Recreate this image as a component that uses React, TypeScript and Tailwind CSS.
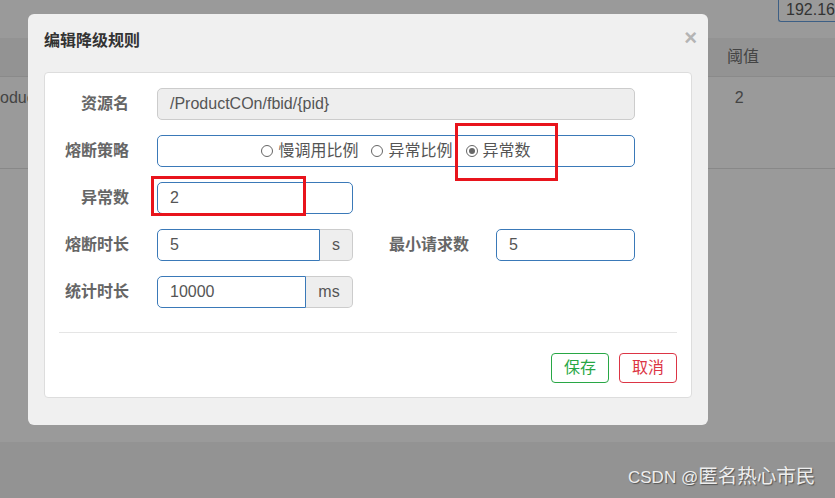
import React from "react";

const font = { fontFamily: '"Liberation Sans", "Noto Sans CJK SC", sans-serif' };

function Label({ children }: { children: React.ReactNode }) {
  return (
    <div className="w-[100px] shrink-0 pr-[28px] text-right text-[16px] font-bold text-[#666]">{children}</div>
  );
}

function Radio({ checked, label }: { checked?: boolean; label: string }) {
  return (
    <label className="flex items-center gap-[5px]">
      <span className="flex h-[12px] w-[12px] items-center justify-center rounded-full border border-[#666] bg-white">
        {checked && <span className="h-[6px] w-[6px] rounded-full bg-[#666]" />}
      </span>
      <span>{label}</span>
    </label>
  );
}

export default function App() {
  return (
    <div className="relative h-[498px] w-[835px] overflow-hidden bg-[#9a9a9a] text-[16px]" style={font}>
      {/* page behind the overlay */}
      <div className="flex h-[38px] justify-end">
        <div className="h-[22px] w-[57px] rounded-bl-[3px] border border-t-0 border-r-0 border-[#3d5f85] pl-[7px] text-[16px] leading-[20px] text-[#333]">
          192.16
        </div>
      </div>
      <div className="flex h-[39px] items-center border-b border-[#8a8a8a] bg-[#939393]">
        <span className="ml-[727px] text-[#444]">阈值</span>
      </div>
      <div className="flex h-[92px] items-start border-b border-[#888] pt-[9px] text-[#444]">
        <span className="ml-0">oduc</span>
        <span className="ml-[700px]">2</span>
      </div>
      <div className="mt-[273px] h-[56px] bg-[#939393]" />

      {/* modal */}
      <div className="absolute left-[28px] top-[14px] flex h-[411px] w-[680px] flex-col rounded-[6px] bg-[#f0f0f0] px-[16px]">
        <div className="flex h-[54px] items-center justify-between">
          <h3 className="text-[16px] font-bold text-[#333]">编辑降级规则</h3>
          <span className="mr-[-5px] mt-[-8px] text-[22px] font-bold text-[#b4b4b4]">×</span>
        </div>
        <div className="mt-[4px] flex h-[326px] flex-col rounded-[4px] border border-[#ddd] bg-white px-[12px] text-[#555]">
          <div className="mt-[15px] flex h-[32px] items-center">
            <Label>资源名</Label>
            <div className="flex h-[32px] w-[478px] items-center rounded-[5px] border border-[#ccc] bg-[#eee] px-[12px] text-[#555]">
              /ProductCOn/fbid/{"{pid}"}
            </div>
          </div>
          <div className="mt-[15px] flex h-[32px] items-center">
            <Label>熔断策略</Label>
            <div className="relative flex h-[32px] w-[478px] items-center justify-center gap-[13px] rounded-[5px] border border-[#3a79b8] text-[#555]">
              <Radio label="慢调用比例" />
              <Radio label="异常比例" />
              <Radio checked label="异常数" />
              <div className="absolute left-[297px] top-[-13px] h-[58px] w-[103px] border-[3px] border-[#e8141c]" />
            </div>
          </div>
          <div className="mt-[15px] flex h-[32px] items-center">
            <Label>异常数</Label>
            <div className="relative flex h-[32px] w-[196px] items-center rounded-[5px] border border-[#3a79b8] px-[12px]">
              2
              <div className="absolute left-[-7px] top-[-7px] h-[40px] w-[155px] border-[3px] border-[#e8141c]" />
            </div>
          </div>
          <div className="mt-[15px] flex h-[32px] items-center">
            <Label>熔断时长</Label>
            <div className="flex h-[32px] w-[196px]">
              <div className="flex flex-1 items-center rounded-l-[5px] border border-[#3a79b8] px-[12px]">5</div>
              <div className="flex w-[33px] items-center justify-center rounded-r-[5px] border border-l-0 border-[#ccc] bg-[#eee]">s</div>
            </div>
            <div className="ml-[36px] w-[107px] text-[16px] font-bold text-[#666]">最小请求数</div>
            <div className="flex h-[32px] w-[139px] items-center rounded-[5px] border border-[#3a79b8] px-[12px]">5</div>
          </div>
          <div className="mt-[15px] flex h-[32px] items-center">
            <Label>统计时长</Label>
            <div className="flex h-[32px] w-[196px]">
              <div className="flex flex-1 items-center rounded-l-[5px] border border-[#3a79b8] px-[12px]">10000</div>
              <div className="flex w-[47px] items-center justify-center rounded-r-[5px] border border-l-0 border-[#ccc] bg-[#eee]">ms</div>
            </div>
          </div>
          <div className="mx-[2px] mt-[24px] border-t border-[#e5e5e5]" />
          <div className="mt-[20px] flex justify-end gap-[10px] pr-[2px]">
            <button className="h-[30px] w-[58px] rounded-[4px] border border-[#28a745] text-[16px] text-[#28a745]">保存</button>
            <button className="h-[30px] w-[58px] rounded-[4px] border border-[#dc3545] text-[16px] text-[#dc3545]">取消</button>
          </div>
        </div>
      </div>

      <div className="absolute left-[628px] top-[462px] flex items-baseline text-[#eeeeee] [text-shadow:1px_1px_1px_#555]">
        <span className="text-[17px]">CSDN @</span>
        <span className="text-[19.5px]">匿名热心市民</span>
      </div>
    </div>
  );
}
